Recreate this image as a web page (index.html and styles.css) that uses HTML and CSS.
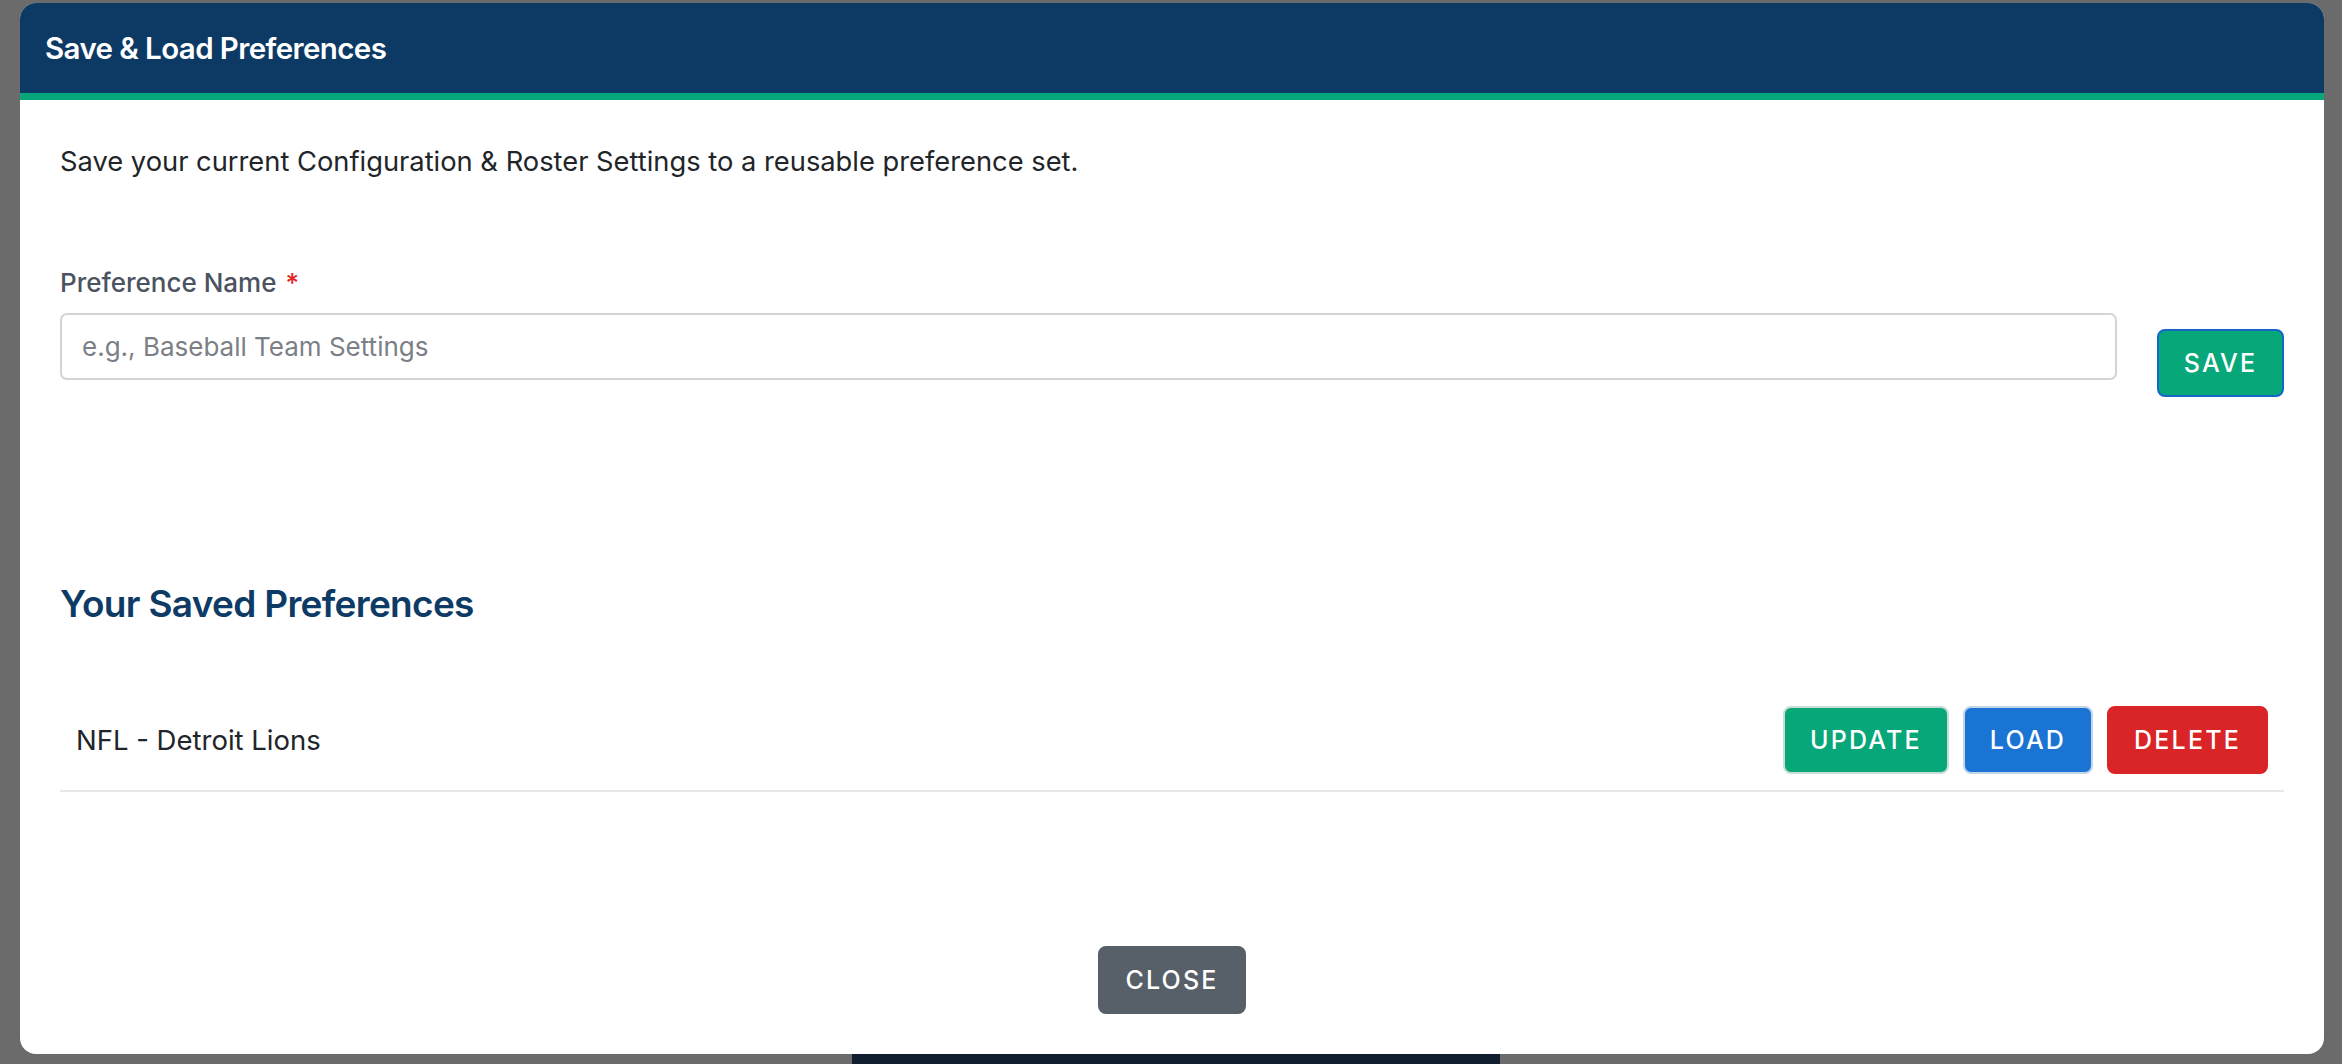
FILE: index.html
```html
<!DOCTYPE html>
<html lang="en">
<head>
<meta charset="utf-8">
<title>Save &amp; Load Preferences</title>
<link rel="stylesheet" href="styles.css">
</head>
<body>
<div class="backdrop">
  <div class="modal">
    <header class="modal-header">
      <h2 class="modal-title">Save &amp; Load Preferences</h2>
    </header>
    <div class="modal-body">
      <p class="intro">Save your current Configuration &amp; Roster Settings to a reusable preference set.</p>
      <div class="save-row">
        <div class="field">
          <label class="field-label" for="pref-name">Preference Name <span class="req">*</span></label>
          <input class="text-input" id="pref-name" type="text" placeholder="e.g., Baseball Team Settings">
        </div>
        <button class="btn btn-green btn-focus" type="button">Save</button>
      </div>
      <h3 class="section-title">Your Saved Preferences</h3>
      <ul class="pref-list">
        <li class="pref-item">
          <span class="pref-name">NFL - Detroit Lions</span>
          <div class="pref-actions">
            <button class="btn btn-green" type="button">Update</button>
            <button class="btn btn-blue" type="button">Load</button>
            <button class="btn btn-red" type="button">Delete</button>
          </div>
        </li>
      </ul>
    </div>
    <footer class="modal-footer">
      <button class="btn btn-gray" type="button">Close</button>
    </footer>
  </div>
</div>
</body>
</html>
```

FILE: styles.css
```css
* { box-sizing: border-box; }

html, body {
  margin: 0;
  padding: 0;
  height: 100%;
}

body {
  font-family: Inter, "Noto Sans", "Liberation Sans", sans-serif;
  background-color: #6b6b6b;
  background-image: linear-gradient(#0f1d2e, #0f1d2e);
  background-repeat: no-repeat;
  background-size: 648px 12px;
  background-position: 852px 100%;
  overflow: hidden;
}

.backdrop {
  height: 100%;
  padding: 3px 18px 10px 20px;
  display: flex;
}

.modal {
  flex: 1;
  background: #ffffff;
  border-radius: 16px;
  overflow: hidden;
  display: flex;
  flex-direction: column;
}

.modal-header {
  background: #0d3a65;
  border-bottom: 7px solid #08a67b;
  height: 97px;
  padding: 0 25px;
  display: flex;
  align-items: center;
}

.modal-title {
  margin: 0;
  color: #ffffff;
  font-size: 29.5px;
  font-weight: 600;
  letter-spacing: -0.6px;
}

.modal-body {
  flex: 1;
  padding: 44px 40px 0 40px;
}

.intro {
  margin: 0;
  font-size: 27.3px;
  line-height: 36px;
  color: #212529;
}

.save-row {
  display: flex;
  align-items: flex-end;
  gap: 40px;
  margin-top: 85px;
}

.field {
  flex: 1;
  display: flex;
  flex-direction: column;
}

.field-label {
  font-size: 26px;
  line-height: 36px;
  font-weight: 500;
  color: #4b5260;
  margin-bottom: 12px;
}

.req {
  color: #e02424;
  margin-left: 2px;
}

.text-input {
  height: 67px;
  border: 2px solid #d4d4d8;
  border-radius: 7px;
  padding: 0 20px;
  font-family: inherit;
  font-size: 26px;
  color: #212529;
  outline: none;
}

.text-input::placeholder { color: #7b7f86; }

.btn {
  font-family: inherit;
  font-size: 25px;
  font-weight: 500;
  letter-spacing: 2.2px;
  text-transform: uppercase;
  color: #ffffff;
  border: 2px solid transparent;
  border-radius: 8px;
  height: 68px;
  padding: 0 25px;
  cursor: pointer;
}

.btn-green { background: #07a779; border-color: #c9dcd6; }
.btn-blue { background: #1a74d4; border-color: #c4d5ea; }
.btn-red { background: #d92527; border-color: #d92527; }
.btn-gray { background: #576069; border-color: #576069; }

.btn-focus {
  border-color: #1466c7;
  margin-bottom: -17px;
  width: 127px;
  padding: 0;
}

.section-title {
  margin: 200px 0 0 0;
  font-size: 37px;
  line-height: 48px;
  font-weight: 600;
  letter-spacing: -0.7px;
  color: #0d3b66;
}

.pref-list {
  list-style: none;
  margin: 78px 0 0 0;
  padding: 0;
}

.pref-item {
  display: flex;
  align-items: center;
  justify-content: space-between;
  padding: 0 16px 16px 16px;
  border-bottom: 2px solid #e6e7e9;
}

.pref-name {
  font-size: 27.5px;
  color: #212529;
}

.pref-actions {
  display: flex;
  gap: 14px;
}

.modal-footer {
  display: flex;
  justify-content: center;
  padding: 0 0 40px 0;
}
```
